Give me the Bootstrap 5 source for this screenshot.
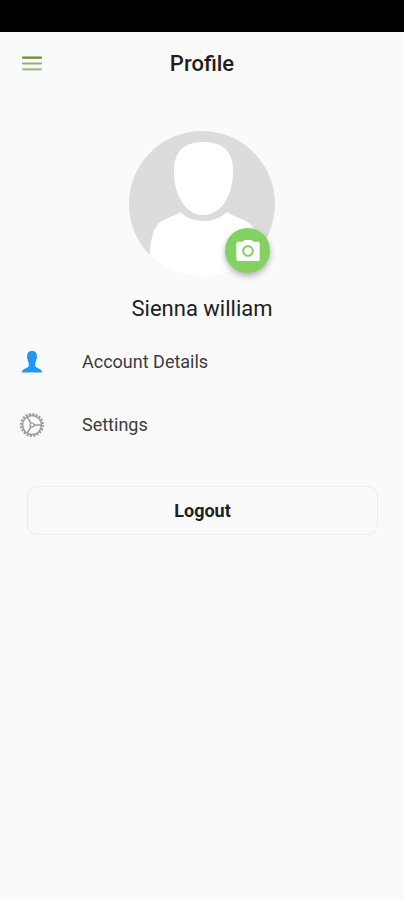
<!DOCTYPE html>
<html lang="en">
<head>
<meta charset="utf-8">
<meta name="viewport" content="width=device-width, initial-scale=1">
<title>Profile</title>
<link href="https://cdn.jsdelivr.net/npm/bootstrap@5.3.0/dist/css/bootstrap.min.css" rel="stylesheet">
<style>
body { font-family: Roboto, "Liberation Sans", sans-serif; background: #fafafa; color: #202020; }
.status-strip { height: 32px; background: #000; }
.top-bar { height: 64px; padding: 0 20px; }
.menu-btn { width: 24px; height: 24px; }
.page-title { font-size: 22px; line-height: 28px; font-weight: 500; }
.avatar { width: 146px; height: 146px; margin-top: 35px; }
.camera-btn { right: 5px; bottom: 4px; width: 45px; height: 45px; background: #83d161; box-shadow: 0 3px 6px rgba(0,0,0,.3); }
.person-name { font-size: 22px; line-height: 28px; margin-top: 18px; }
.menu-list { margin-top: 7px; }
.menu-row { height: 63px; gap: 38px; padding: 0 20px; font-size: 18px; line-height: 24px; color: #3c3c3c; }
.menu-row:hover { color: #000; }
.logout-btn { height: 49px; border: 1px solid #ececec; border-radius: 10px; font-size: 18px; line-height: 24px; font-weight: 700; color: #202020; }
.logout-wrap { padding: 0 26px 0 27px; margin-top: 30px; }
svg { display: block; }
</style>
</head>
<body>
<div class="status-strip"></div>
<header class="top-bar d-flex align-items-center justify-content-between">
  <button type="button" class="menu-btn btn p-0 border-0" aria-label="Menu">
    <svg width="24" height="24" viewBox="0 0 24 24" stroke-width="2.200" stroke-linecap="round"><path d="M3 5.700h18" stroke="#6b8c30"/><path d="M3 11.500h18" stroke="#94b46c"/><path d="M3 17.300h18" stroke="#a5b890"/></svg>
  </button>
  <h1 class="page-title m-0">Profile</h1>
  <span class="menu-btn"></span>
</header>
<main>
  <div class="avatar position-relative mx-auto">
    <svg width="146" height="146" viewBox="0 0 146 146" role="img" aria-label="Profile picture">
      <defs><clipPath id="round"><circle cx="73" cy="73" r="73"/></clipPath></defs>
      <g clip-path="url(#round)">
        <path fill="#dcdcdc" d="M0 0h146v146H0z"/>
        <path fill="#fff" d="M74 11C91 11 103 18 104 37C105 61 94 84 74 84C55 84 44 61 45 37C46 18 58 11 74 11Z"/>
        <path fill="#fff" d="M20 146C21 118 21 101 30 92C36 87 44 86 51 81C64 93 85 93 98 81C105 86 114 87 121 93C130 101 131 119 132 146Z"/>
      </g>
    </svg>
    <button type="button" class="camera-btn btn position-absolute p-0 border-0 rounded-circle d-flex align-items-center justify-content-center" aria-label="Change photo">
      <svg width="28" height="28" viewBox="0 0 24 24" fill="#fff"><circle cx="12" cy="12" r="3.200"/><path d="M9 2.500 7.200 4H3.500C2.700 4 2 4.500 2 5.300v13.900c0 .8.600 1.300 1.400 1.300h17.200c.8 0 1.400-.5 1.400-1.300V5.300C22 4.500 21.300 4 20.500 4h-3.700L15 2.500H9zm3 14.500c-2.760 0-5-2.240-5-5s2.240-5 5-5 5 2.240 5 5-2.240 5-5 5z"/></svg>
    </button>
  </div>
  <h2 class="person-name text-center fw-normal mb-0">Sienna william</h2>
  <nav class="menu-list">
    <a href="#account" class="menu-row d-flex align-items-center text-decoration-none">
      <svg width="24" height="24" viewBox="0 0 24 24" fill="#2196f3"><path d="M12 1C8.500 1 7 3 7.200 6.500C6.700 7 7 8.500 7.600 9C7.800 11 8.300 12 8.800 13V16C8 18.500 2 18 2 22.500H22C22 18 16 18.500 15.200 16V13C15.700 12 16.200 11 16.400 9C17 8.500 17.300 7 16.800 6.500C17 3 15.500 1 12 1Z"/></svg>
      <span>Account Details</span>
    </a>
    <a href="#settings" class="menu-row d-flex align-items-center text-decoration-none">
      <svg width="24" height="24" viewBox="0 0 24 24" fill="none" stroke="#999"><circle cx="12" cy="12" r="11" stroke-width="2" stroke-dasharray="2 1.456"/><circle cx="12" cy="12" r="9.500" stroke-width="1.500"/><circle cx="12" cy="12" r="2" stroke-width="1.200"/><path stroke-width="1.500" d="M14 12h7.500M11 10.300 7.300 3.900M11 13.700 7.300 20.100"/></svg>
      <span>Settings</span>
    </a>
  </nav>
  <div class="logout-wrap"><button type="button" class="logout-btn btn w-100 p-0">Logout</button></div>
</main>
<script src="https://cdn.jsdelivr.net/npm/bootstrap@5.3.0/dist/js/bootstrap.bundle.min.js"></script>
</body>
</html>
